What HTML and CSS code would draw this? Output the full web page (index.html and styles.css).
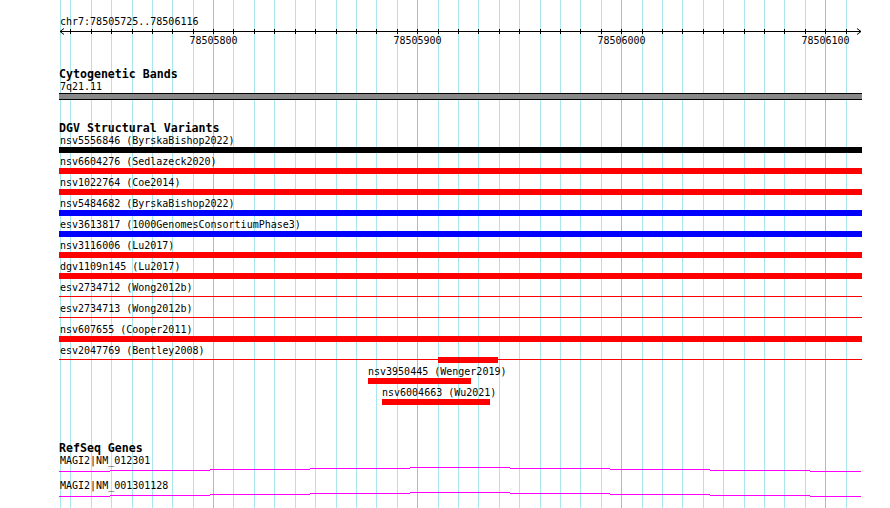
FILE: index.html
```html
<!DOCTYPE html>
<html lang="en">
<head>
  <meta charset="UTF-8" />
  <meta name="viewport" content="width=device-width, initial-scale=1.0"/>
  <title>chr7:78505725..78506116</title>
  <link rel="stylesheet" href="styles.css">
</head>
<body>

<div class="browser">

  <!-- base position guidelines, every 10 bp (darker every 100 bp) -->
  <svg class="guides" width="803" height="508">
    <path class="minor" d="M1.5 0V508M11.5 0V508M32.5 0V508M52.5 0V508M73.5 0V508M93.5 0V508M113.5 0V508M134.5 0V508M174.5 0V508M195.5 0V508M215.5 0V508M236.5 0V508M256.5 0V508M277.5 0V508M297.5 0V508M317.5 0V508M338.5 0V508M379.5 0V508M399.5 0V508M419.5 0V508M440.5 0V508M460.5 0V508M481.5 0V508M501.5 0V508M521.5 0V508M542.5 0V508M583.5 0V508M603.5 0V508M623.5 0V508M644.5 0V508M664.5 0V508M685.5 0V508M705.5 0V508M725.5 0V508M746.5 0V508M787.5 0V508"/>
    <path class="major" d="M154.5 0V508M358.5 0V508M562.5 0V508M766.5 0V508"/>
  </svg>

  <div class="ruler">
    <div class="pos">chr7:78505725..78506116</div>
    <svg class="axis" width="803" height="20">
      <path d="M1 4.5H802M5 1.5L1 4.5L5 7.5M798 1.5L802 4.5L798 7.5"/>
      <path d="M11.5 2V7M32.5 2V7M52.5 2V7M73.5 2V7M93.5 2V7M113.5 2V7M134.5 2V7M154.5 2V7M174.5 2V7M195.5 2V7M215.5 2V7M236.5 2V7M256.5 2V7M277.5 2V7M297.5 2V7M317.5 2V7M338.5 2V7M358.5 2V7M379.5 2V7M399.5 2V7M419.5 2V7M440.5 2V7M460.5 2V7M481.5 2V7M501.5 2V7M521.5 2V7M542.5 2V7M562.5 2V7M583.5 2V7M603.5 2V7M623.5 2V7M644.5 2V7M664.5 2V7M685.5 2V7M705.5 2V7M725.5 2V7M746.5 2V7M766.5 2V7M787.5 2V7"/>
      <text x="154.5" y="17">78505800</text>
      <text x="358.5" y="17">78505900</text>
      <text x="562.5" y="17">78506000</text>
      <text x="766.5" y="17">78506100</text>
    </svg>
  </div>

  <section class="track cyto">
    <h2>Cytogenetic Bands</h2>
    <div class="label">7q21.11</div>
    <div class="band"></div>
  </section>

  <section class="track dgv">
    <h2>DGV Structural Variants</h2>

    <div class="row">
      <div class="label">nsv5556846 (ByrskaBishop2022)</div>
      <div class="lane"><div class="feat black full"></div></div>
    </div>
    <div class="row">
      <div class="label">nsv6604276 (Sedlazeck2020)</div>
      <div class="lane"><div class="feat red full"></div></div>
    </div>
    <div class="row">
      <div class="label">nsv1022764 (Coe2014)</div>
      <div class="lane"><div class="feat red full"></div></div>
    </div>
    <div class="row">
      <div class="label">nsv5484682 (ByrskaBishop2022)</div>
      <div class="lane"><div class="feat blue full"></div></div>
    </div>
    <div class="row">
      <div class="label">esv3613817 (1000GenomesConsortiumPhase3)</div>
      <div class="lane"><div class="feat blue full"></div></div>
    </div>
    <div class="row">
      <div class="label">nsv3116006 (Lu2017)</div>
      <div class="lane"><div class="feat red full"></div></div>
    </div>
    <div class="row">
      <div class="label">dgv1109n145 (Lu2017)</div>
      <div class="lane"><div class="feat red full"></div></div>
    </div>
    <div class="row">
      <div class="label">esv2734712 (Wong2012b)</div>
      <div class="lane"><div class="feat red full thin"></div></div>
    </div>
    <div class="row">
      <div class="label">esv2734713 (Wong2012b)</div>
      <div class="lane"><div class="feat red full thin"></div></div>
    </div>
    <div class="row">
      <div class="label">nsv607655 (Cooper2011)</div>
      <div class="lane"><div class="feat red full"></div></div>
    </div>
    <div class="row">
      <div class="label">esv2047769 (Bentley2008)</div>
      <div class="lane">
        <div class="feat red full thin"></div>
        <div class="feat red" style="left:379px;width:60px"></div>
      </div>
    </div>
    <div class="row">
      <div class="label" style="margin-left:308px">nsv3950445 (Wenger2019)</div>
      <div class="lane"><div class="feat red" style="left:309px;width:103px"></div></div>
    </div>
    <div class="row">
      <div class="label" style="margin-left:322px">nsv6004663 (Wu2021)</div>
      <div class="lane"><div class="feat red" style="left:323px;width:108px"></div></div>
    </div>
  </section>

  <section class="track refseq">
    <h2>RefSeq Genes</h2>
    <div class="gene">
      <div class="label">MAGI2|NM_012301</div>
      <svg class="intron" width="803" height="13">
        <path d="M0 5.5H51M51 4.5H151M151 3.5H251M251 2.5H351M351 1.5H451M451 2.5H551M551 3.5H651M651 4.5H751M751 5.5H802"/>
      </svg>
    </div>
    <div class="gene">
      <div class="label">MAGI2|NM_001301128</div>
      <svg class="intron" width="803" height="13">
        <path d="M0 5.5H51M51 4.5H151M151 3.5H251M251 2.5H351M351 1.5H451M451 2.5H551M551 3.5H651M651 4.5H751M751 5.5H802"/>
      </svg>
    </div>
  </section>

</div>

</body>
</html>
```

FILE: styles.css
```css
body {
  margin: 0;
  background: #fff;
}

.browser {
  position: relative;
  z-index: 0;
  width: 803px;
  height: 508px;
  margin-left: 59px;
  overflow: hidden;
  font-family: "DejaVu Sans Mono", monospace;
  font-size: 10px;
  line-height: 11px;
  color: #000;
}

.guides {
  position: absolute;
  top: 0;
  left: 0;
  z-index: -1;
  fill: none;
}

.guides .minor {
  stroke: #a8e8ec;
}

.guides .major {
  stroke: #8cc6e2;
}

svg {
  display: block;
}

/* ruler */
.ruler {
  padding-top: 16px;
}

.pos {
  padding-left: 1px;
}

.axis path {
  fill: none;
  stroke: #000;
  stroke-width: 1;
}

.axis text {
  font-family: "DejaVu Sans Mono", monospace;
  font-size: 10px;
  text-anchor: middle;
}

/* tracks */
.track h2 {
  margin: 0;
  font-size: 11.6px;
  line-height: 12px;
  font-weight: bold;
}

.label {
  margin-top: 1px;
  padding-left: 1px;
  white-space: nowrap;
}

.cyto {
  margin-top: 21px;
}

.band {
  margin-top: 1px;
  height: 5px;
  background: #888;
  border-top: 1px solid #000;
  border-bottom: 1px solid #000;
}

.dgv {
  margin-top: 22px;
}

.row {
  display: flow-root;
  margin-bottom: 2px;
}

.lane {
  position: relative;
  height: 6px;
  margin-top: 1px;
}

.feat {
  position: absolute;
  top: 0;
  height: 6px;
}

.feat.full {
  left: 0;
  right: 0;
}

.feat.thin {
  top: 2px;
  height: 1px;
}

.black { background: #000; }
.red { background: #f00; }
.blue { background: #00f; }

.refseq {
  margin-top: 37px;
}

.gene {
  display: flow-root;
}

.intron path {
  fill: none;
  stroke: #f0f;
  stroke-width: 1;
}
```
